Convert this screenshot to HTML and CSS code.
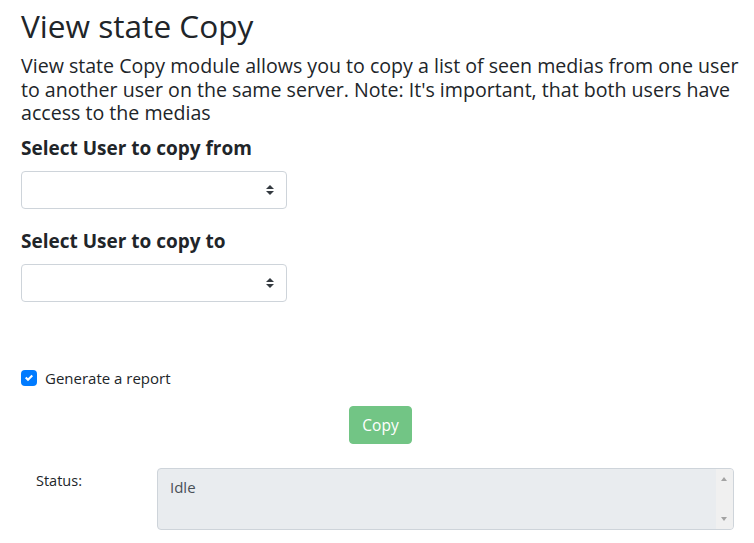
FILE: index.html
```html
<!DOCTYPE html>
<html lang="en">
<head>
<meta charset="utf-8">
<title>View state Copy</title>
<link rel="stylesheet" href="styles.css">
</head>
<body>
<main class="page">
  <h1 class="title">View state Copy</h1>
  <p class="lead">View state Copy module allows you to copy a list of seen medias from one user to another user on the same server. Note: It's important, that both users have access to the medias</p>

  <div class="field">
    <label class="field-label" for="from">Select User to copy from</label>
    <select id="from" class="select"><option></option></select>
  </div>

  <div class="field">
    <label class="field-label" for="to">Select User to copy to</label>
    <select id="to" class="select"><option></option></select>
  </div>

  <div class="check">
    <input id="report" type="checkbox" class="check-input" checked>
    <label for="report" class="check-label">Generate a report</label>
  </div>

  <div class="actions">
    <button class="btn" disabled>Copy</button>
  </div>

  <div class="status-row">
    <label class="status-label" for="status">Status:</label>
    <div class="status-wrap">
      <textarea id="status" class="status-box" disabled>Idle</textarea>
      <div class="scrollbar" aria-hidden="true">
        <span class="arrow arrow-up"></span>
        <span class="arrow arrow-down"></span>
      </div>
    </div>
  </div>
</main>
</body>
</html>
```

FILE: styles.css
```css
* { box-sizing: border-box; }

html, body {
  margin: 0;
  background: #fff;
}

body {
  font-family: "Open Sans", "Noto Sans", sans-serif;
  color: #212529;
}

.page {
  padding: 0 12px 0 21px;
  display: flex;
  flex-direction: column;
}

.title {
  font-size: 31.6px;
  font-weight: 500;
  line-height: 40px;
  margin: 6px 0 8px;
}

.lead {
  font-size: 19.6px;
  font-weight: 500;
  line-height: 23.5px;
  margin: 0 0 11px;
}

.field {
  display: flex;
  flex-direction: column;
  margin-bottom: 20px;
}

.field-label {
  font-size: 19px;
  font-weight: 700;
  line-height: 24px;
  margin-bottom: 11px;
}

.select {
  width: 266px;
  height: 38px;
  border: 1px solid #ced4da;
  border-radius: 4px;
  background: #fff url("data:image/svg+xml,%3csvg xmlns='http://www.w3.org/2000/svg' width='4' height='5' viewBox='0 0 4 5'%3e%3cpath fill='%23343a40' d='M2 0L0 2h4zm0 5L0 3h4z'/%3e%3c/svg%3e") no-repeat right 12px center / 8px 10px;
  appearance: none;
  -webkit-appearance: none;
  font: inherit;
  font-size: 16px;
}

.check {
  display: flex;
  align-items: center;
  gap: 8px;
  margin-top: 44px;
  height: 24px;
}

.check-input {
  appearance: none;
  -webkit-appearance: none;
  width: 16px;
  height: 16px;
  margin: 0;
  border-radius: 4px;
  background: #007bff url("data:image/svg+xml,%3csvg xmlns='http://www.w3.org/2000/svg' width='8' height='8' viewBox='0 0 8 8'%3e%3cpath fill='%23fff' d='M6.564.75l-3.59 3.612-1.538-1.55L0 4.26 2.974 7.25 8 2.193z'/%3e%3c/svg%3e") no-repeat center / 8px 8px;
}

.check-label {
  font-size: 15px;
  line-height: 24px;
}

.actions {
  display: flex;
  justify-content: center;
  padding-right: 2px;
  margin-top: 16px;
}

.btn {
  width: 63px;
  height: 38px;
  border: 1px solid #28a745;
  background: #28a745;
  opacity: 0.65;
  color: #fff;
  border-radius: 4px;
  font: inherit;
  font-size: 15.5px;
  padding: 0;
}

.status-row {
  display: flex;
  margin: 24px 8px 0 0;
  padding-left: 15px;
}

.status-label {
  width: 121px;
  font-size: 14.5px;
  line-height: 20px;
  padding-top: 3px;
}

.status-wrap {
  flex: 1;
  position: relative;
  height: 62px;
}

.status-box {
  display: block;
  width: 100%;
  height: 62px;
  border: 1px solid #ced4da;
  border-radius: 4px;
  background: #e9ecef;
  color: #495057;
  font: inherit;
  font-size: 15px;
  line-height: 24px;
  padding: 6px 12px;
  resize: none;
  overflow: hidden;
}

.scrollbar {
  position: absolute;
  top: 1px;
  right: 1px;
  bottom: 1px;
  width: 17px;
  background: #f0f0f0;
  border-radius: 0 3px 3px 0;
}

.arrow {
  position: absolute;
  left: 5px;
  width: 0;
  height: 0;
  border-left: 3.5px solid transparent;
  border-right: 3.5px solid transparent;
}

.arrow-up {
  top: 8px;
  border-bottom: 4px solid #a3a3a3;
}

.arrow-down {
  bottom: 8px;
  border-top: 4px solid #a3a3a3;
}
```
